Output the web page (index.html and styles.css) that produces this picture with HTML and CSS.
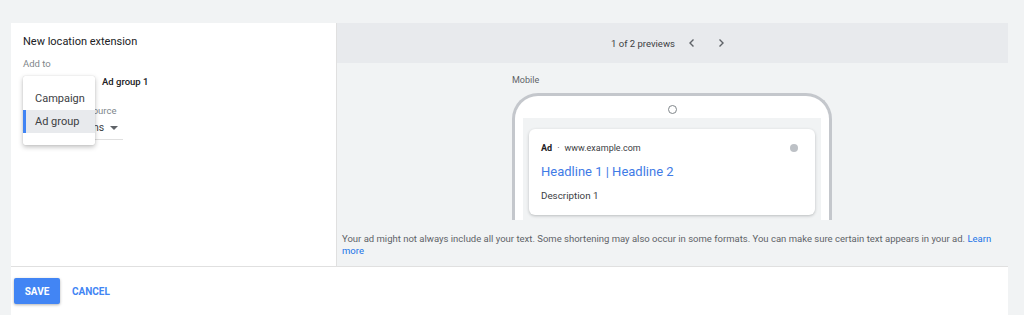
FILE: index.html
```html
<!DOCTYPE html>
<html lang="en">
<head>
<title>New location extension</title>
<meta charset="utf-8">
<link rel="stylesheet" href="styles.css">
</head>
<body>

<div class="dialog">
  <div class="main">

    <!-- Left: the form -->
    <section class="editor">
      <h2 class="title">New location extension</h2>
      <div class="label">Add to</div>
      <div class="add-row">
        <div class="select-spacer"></div>
        <span class="group-name">Ad group 1</span>
      </div>
      <div class="label source-label">Select location source</div>
      <div class="source-select">Affiliate locations <span class="caret"></span></div>

      <ul class="menu">
        <li class="menu-item">Campaign</li>
        <li class="menu-item selected">Ad group</li>
      </ul>
    </section>

    <!-- Right: the preview -->
    <section class="preview">
      <div class="preview-bar">
        <span class="count">1 of 2 previews</span>
        <svg class="chev" width="10" height="10" viewBox="0 0 10 10"><path d="M6.5 1.5L3 5l3.5 3.5" fill="none" stroke="#5f6368" stroke-width="1.4"/></svg>
        <svg class="chev next" width="10" height="10" viewBox="0 0 10 10"><path d="M3.5 1.5L7 5 3.5 8.5" fill="none" stroke="#5f6368" stroke-width="1.4"/></svg>
      </div>
      <div class="preview-body">
        <div class="device">
          <div class="device-label">Mobile</div>
          <div class="phone">
            <div class="camera"></div>
            <div class="screen">
              <div class="ad-card">
                <div class="ad-top">
                  <b>Ad</b><span class="dot">·</span><span>www.example.com</span>
                  <span class="info"></span>
                </div>
                <div class="headline">Headline 1 | Headline 2</div>
                <div class="desc">Description 1</div>
              </div>
            </div>
          </div>
        </div>
        <p class="note">Your ad might not always include all your text. Some shortening may also occur in some formats. You can make sure certain text appears in your ad. <a href="#">Learn more</a></p>
      </div>
    </section>

  </div>

  <footer class="actions">
    <button class="btn-save">SAVE</button>
    <button class="btn-cancel">CANCEL</button>
  </footer>
</div>

</body>
</html>
```

FILE: styles.css
```css
* {
  box-sizing: border-box;
}

body {
  margin: 0;
  background-color: #f1f3f4;
  font-family: Roboto, "Liberation Sans", Arial, sans-serif;
  color: #202124;
}

.dialog {
  margin: 23px 0 0 11px;
  width: 997px;
  background-color: #fff;
}

.main {
  display: flex;
  height: 243px;
}

/* Left form */
.editor {
  position: relative;
  width: 326px;
  padding: 10px 12px;
  border-right: 1px solid #e0e0e0;
}

.title {
  margin: 0;
  font-size: 11px;
  font-weight: 400;
  line-height: 17px;
}

.label {
  margin-top: 8px;
  font-size: 9.5px;
  color: #80868b;
  line-height: 12px;
}

.add-row {
  display: flex;
  align-items: center;
  height: 22px;
  margin-top: 0;
}

.select-spacer {
  width: 79px;
}

.group-name {
  font-size: 9.5px;
  font-weight: 500;
}

.source-label {
  margin-top: 13px;
}

.source-select {
  width: 100px;
  margin-top: 4px;
  padding-bottom: 4px;
  font-size: 10.5px;
  color: #3c4043;
  border-bottom: 1px solid #e0e0e0;
  line-height: 14px;
  white-space: nowrap;
}

.caret {
  display: inline-block;
  margin-left: 3px;
  border-left: 4px solid transparent;
  border-right: 4px solid transparent;
  border-top: 4px solid #5f6368;
  vertical-align: middle;
}

.menu {
  position: absolute;
  left: 12px;
  top: 53px;
  width: 72px;
  margin: 0;
  padding: 11px 0 12px;
  list-style: none;
  background: #fff;
  border-radius: 2px;
  box-shadow: 0 2px 5px rgba(0, 0, 0, 0.25), 0 0 1px rgba(0, 0, 0, 0.2);
}

.menu-item {
  height: 23px;
  padding-left: 12px;
  line-height: 23px;
  font-size: 11px;
  color: #3c4043;
}

.menu-item.selected {
  background-color: #e8eaed;
  border-left: 3px solid #4285f4;
  padding-left: 9px;
}

/* Right preview */
.preview {
  flex: 1;
  display: flex;
  flex-direction: column;
  background-color: #f1f3f4;
}

.preview-bar {
  display: flex;
  align-items: center;
  justify-content: center;
  height: 40px;
  padding-right: 8px;
  background-color: #e8eaed;
  font-size: 9.5px;
  color: #3c4043;
}

.count {
  margin-right: 12px;
}

.chev.next {
  margin-left: 19px;
}

.preview-body {
  flex: 1;
  display: flex;
  flex-direction: column;
  padding: 11px 16px 0 5px;
}

.device {
  margin-left: 170px;
  width: 320px;
}

.device-label {
  font-size: 9px;
  color: #5f6368;
  line-height: 12px;
}

.phone {
  height: 127px;
  margin-top: 7px;
  padding: 0 8px;
  background: #fff;
  border: 3px solid #c4c7cc;
  border-bottom: none;
  border-radius: 26px 26px 0 0;
  overflow: hidden;
}

.camera {
  width: 9px;
  height: 9px;
  margin: 9px auto 0;
  border: 1px solid #80868b;
  border-radius: 50%;
}

.screen {
  height: 110px;
  margin-top: 4px;
  padding: 11px 6px 0;
  background-color: #f1f3f4;
}

.ad-card {
  height: 86px;
  padding: 12px 11px 0 12px;
  background: #fff;
  border-radius: 6px;
  box-shadow: 0 1px 3px rgba(60, 64, 67, 0.3);
}

.ad-top {
  display: flex;
  align-items: center;
  font-size: 9px;
  color: #3c4043;
  line-height: 14px;
}

.ad-top b {
  color: #202124;
}

.dot {
  margin: 0 5px;
}

.info {
  margin-left: auto;
  width: 8px;
  height: 8px;
  border-radius: 50%;
  background-color: #bdc1c6;
  margin-right: 6px;
}

.headline {
  margin-top: 8px;
  font-size: 13px;
  color: #3f7be6;
  line-height: 18px;
}

.desc {
  margin-top: 8px;
  font-size: 9.8px;
  color: #3c4043;
  line-height: 14px;
}

.note {
  margin: 13px 0 0;
  font-size: 9.5px;
  line-height: 11.5px;
  color: #5f6368;
}

.note a {
  color: #1a73e8;
  text-decoration: none;
}

/* Footer buttons */
.actions {
  display: flex;
  align-items: center;
  gap: 12px;
  height: 49px;
  padding: 0 3px;
  border-top: 1px solid #e0e0e0;
}

.btn-save {
  width: 46px;
  height: 26px;
  border: none;
  border-radius: 2px;
  background-color: #4285f4;
  color: #fff;
  font-family: inherit;
  font-size: 10px;
  font-weight: 700;
  box-shadow: 0 1px 3px rgba(0, 0, 0, 0.3);
}

.btn-cancel {
  padding: 0;
  border: none;
  background: none;
  color: #4285f4;
  font-family: inherit;
  font-size: 10px;
  font-weight: 700;
}
```
